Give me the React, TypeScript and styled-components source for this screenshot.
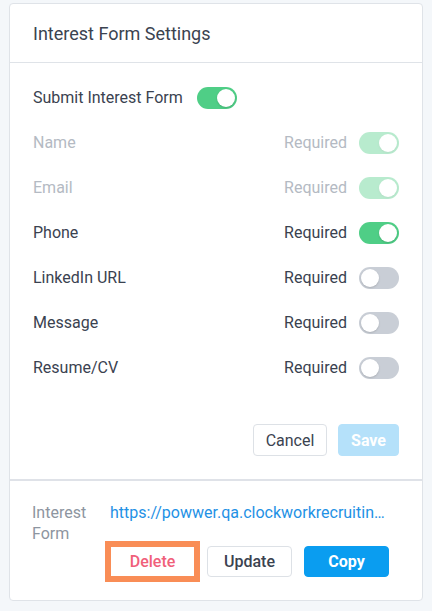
import React from "react";
import styled, { createGlobalStyle } from "styled-components";

const GlobalStyle = createGlobalStyle`
  html, body {
    margin: 0;
    padding: 0;
    background: #f4f7fa;
    font-family: Roboto, "Liberation Sans", Arial, sans-serif;
  }
`;

const Card = styled.div`
  margin: 3px 9px 0;
  width: 414px;
  box-sizing: border-box;
  background: #fff;
  border: 1px solid #dfe3e8;
  border-radius: 4px;
`;

const Header = styled.div`
  height: 58px;
  display: flex;
  align-items: center;
  padding: 0 23px;
  border-bottom: 1px solid #dfe3e8;
  font-size: 18px;
  color: #3b4350;
`;

const Body = styled.div`
  padding: 12px 23px 23px;
  border-bottom: 2px solid #dfe2e8;
`;

const Row = styled.div`
  height: 45px;
  display: flex;
  align-items: center;
`;

const Label = styled.span<{ $muted?: boolean }>`
  font-size: 16px;
  color: ${(p) => (p.$muted ? "#b4bac3" : "#3a4250")};
`;

const MainLabel = styled(Label)`
  margin-right: 14px;
`;

const Spacer = styled.div`
  flex: 1;
`;

const Required = styled(Label)`
  margin-right: 12px;
`;

const Track = styled.div<{ $on: boolean; $disabled?: boolean }>`
  position: relative;
  width: 40px;
  height: 22px;
  border-radius: 11px;
  background: ${(p) => (p.$on ? "#4fce86" : "#c9ced6")};
  opacity: ${(p) => (p.$disabled ? 0.4 : 1)};
`;

const Knob = styled.div<{ $on: boolean }>`
  position: absolute;
  top: 2px;
  left: ${(p) => (p.$on ? "20px" : "2px")};
  width: 18px;
  height: 18px;
  border-radius: 50%;
  background: #fff;
  box-shadow: 0 1px 2px rgba(0, 0, 0, 0.15);
`;

const Actions = styled.div`
  display: flex;
  justify-content: flex-end;
  gap: 11px;
  margin-top: 34px;
`;

type Variant = "default" | "primary" | "disabled" | "danger" | "plain";

const Button = styled.button<{ $variant?: Variant; $w?: number }>`
  height: 32px;
  width: ${(p) => (p.$w ? `${p.$w}px` : "auto")};
  box-sizing: border-box;
  border-radius: 4px;
  font-family: Roboto, "Liberation Sans", Arial, sans-serif;
  font-size: 16px;
  cursor: pointer;
  padding: 0;
  border: 1px solid
    ${(p) => (p.$variant === "primary" ? "#0a9df0" : p.$variant === "disabled" ? "#b5e1fa" : "#dde1e6")};
  background: ${(p) => (p.$variant === "primary" ? "#0a9df0" : p.$variant === "disabled" ? "#b5e1fa" : "#fff")};
  color: ${(p) =>
    p.$variant === "primary" || p.$variant === "disabled"
      ? "#fff"
      : p.$variant === "danger"
      ? "#f0607a"
      : "#3b4350"};
  font-weight: ${(p) =>
    p.$variant === "primary" || p.$variant === "disabled" ? 700 : p.$variant === "plain" ? 400 : 500};
`;

const Footer = styled.div`
  display: grid;
  grid-template-columns: 78px 1fr;
  padding: 21px 32px 23px 22px;
`;

const FooterLabel = styled.div`
  grid-row: span 2;
  font-size: 16px;
  line-height: 21px;
  color: #8d95a0;
`;

const Link = styled.a`
  font-size: 16px;
  line-height: 21px;
  color: #1f91e5;
  white-space: nowrap;
  text-decoration: none;
`;

const FooterButtons = styled.div`
  display: flex;
  gap: 12px;
  margin-top: 23px;

  ${Button} {
    width: 85px;
    height: 31px;
  }
`;

const Highlighted = styled(Button)`
  border-radius: 0;
  outline: 6px solid #f98d56;
  outline-offset: -1px;
`;

type Field = { name: string; on: boolean; disabled?: boolean };

const fields: Field[] = [
  { name: "Name", on: true, disabled: true },
  { name: "Email", on: true, disabled: true },
  { name: "Phone", on: true },
  { name: "LinkedIn URL", on: false },
  { name: "Message", on: false },
  { name: "Resume/CV", on: false },
];

const Toggle: React.FC<{ on: boolean; disabled?: boolean }> = ({ on, disabled }) => (
  <Track $on={on} $disabled={disabled}>
    <Knob $on={on} />
  </Track>
);

const App: React.FC = () => {
  return (
    <>
      <GlobalStyle />
      <Card>
        <Header>Interest Form Settings</Header>
        <Body>
          <Row>
            <MainLabel>Submit Interest Form</MainLabel>
            <Toggle on />
          </Row>
          {fields.map((f) => (
            <Row key={f.name}>
              <Label $muted={f.disabled}>{f.name}</Label>
              <Spacer />
              <Required $muted={f.disabled}>Required</Required>
              <Toggle on={f.on} disabled={f.disabled} />
            </Row>
          ))}
          <Actions>
            <Button $variant="plain" $w={74}>
              Cancel
            </Button>
            <Button $variant="disabled" $w={61}>
              Save
            </Button>
          </Actions>
        </Body>
        <Footer>
          <FooterLabel>
            Interest
            <br />
            Form
          </FooterLabel>
          <Link href="#">https://powwer.qa.clockworkrecruitin…</Link>
          <FooterButtons>
            <Highlighted $variant="danger">Delete</Highlighted>
            <Button>Update</Button>
            <Button $variant="primary">Copy</Button>
          </FooterButtons>
        </Footer>
      </Card>
    </>
  );
};

export default App;
